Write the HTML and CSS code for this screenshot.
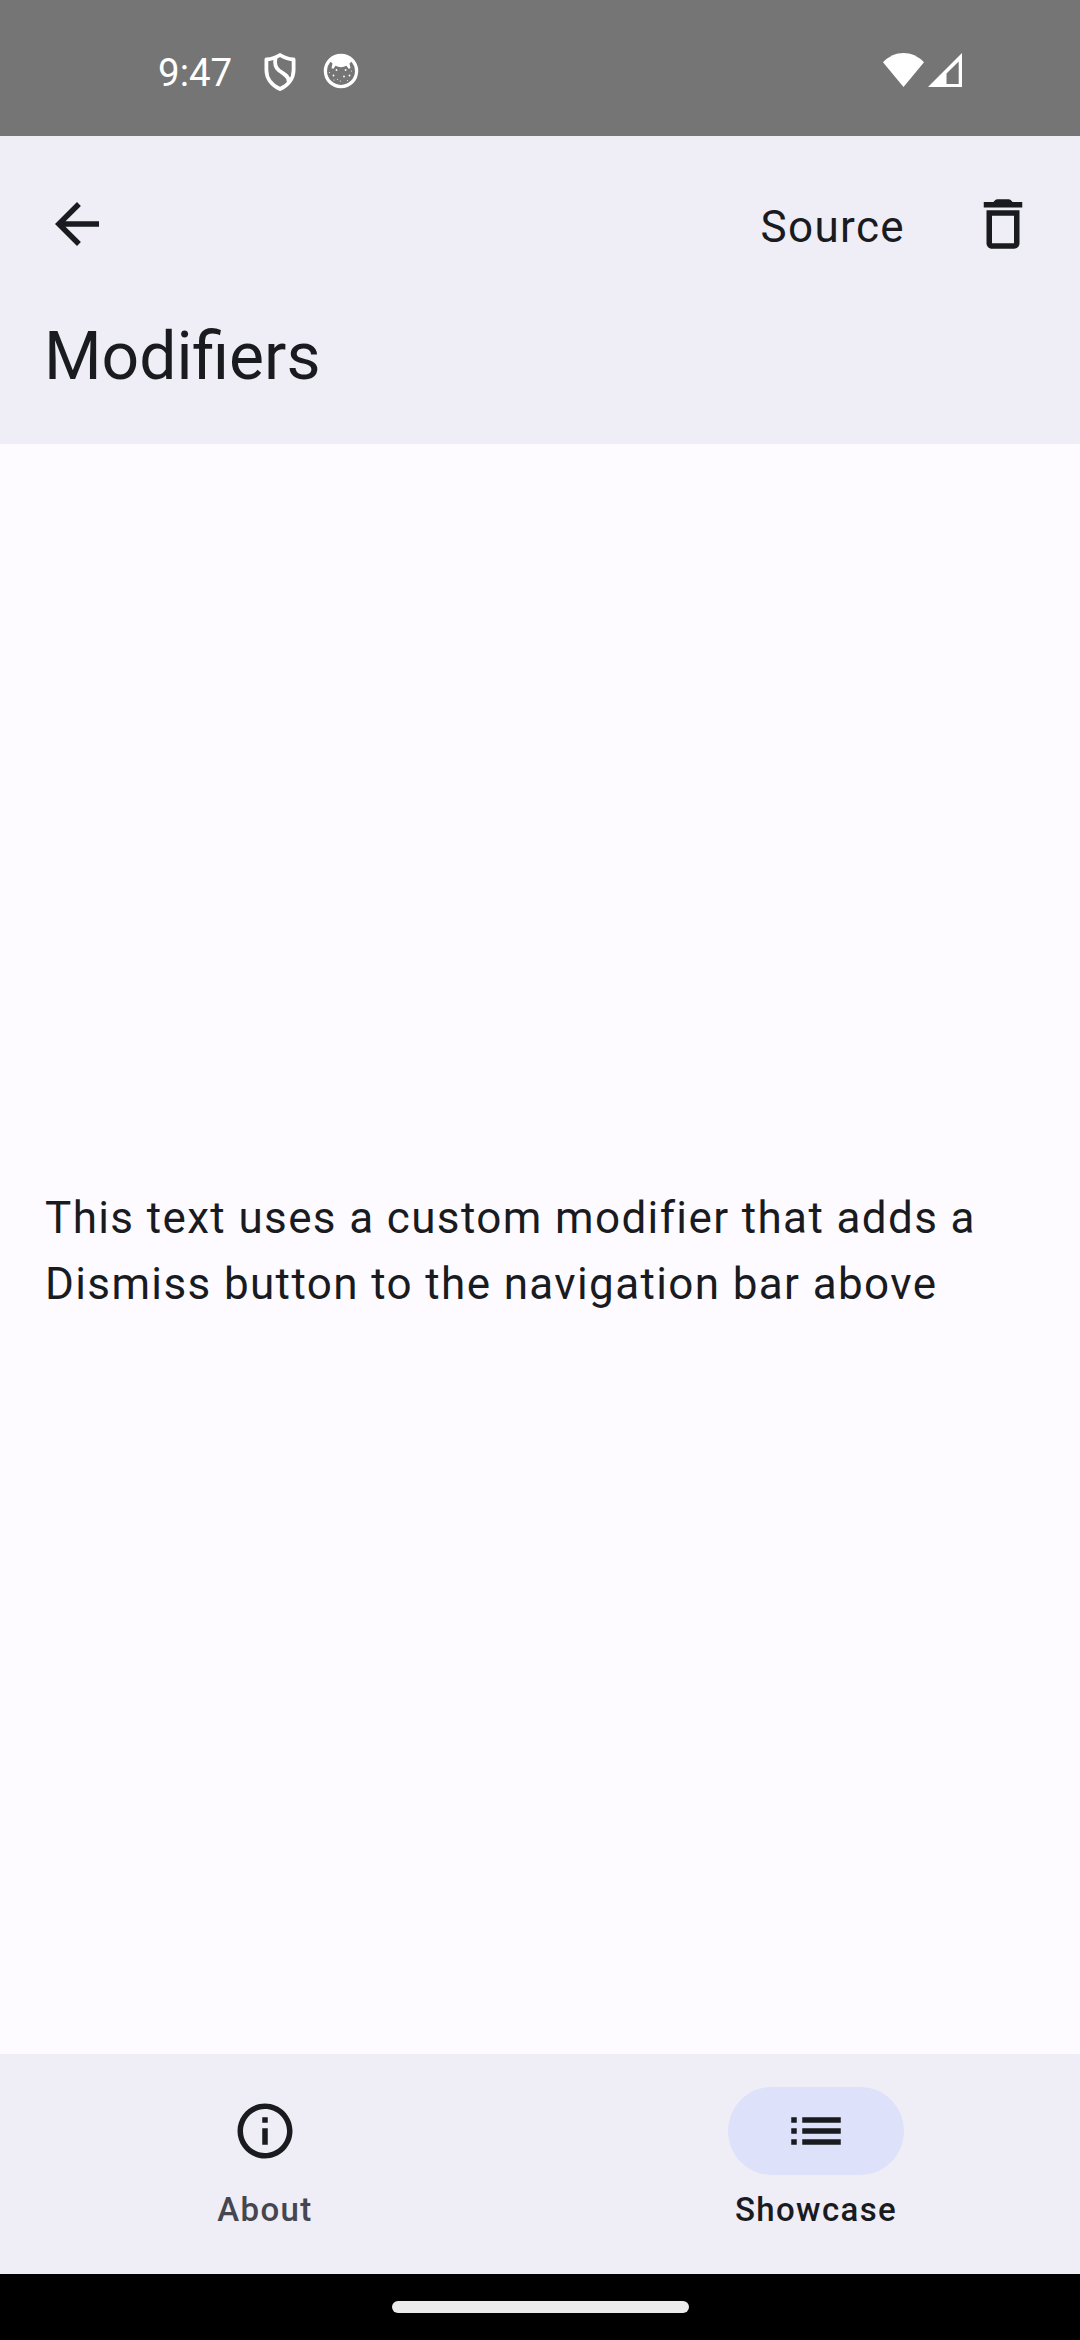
FILE: index.html
```html
<!DOCTYPE html>
<html lang="en">
<head>
<meta charset="utf-8">
<title>Modifiers</title>
<link rel="stylesheet" href="styles.css">
</head>
<body>
<div class="screen">
  <div class="status-bar">
    <div class="status-left">
      <span class="clock">9:47</span>
      <svg class="shield" viewBox="0 0 32 38" fill="none" stroke="#fff" stroke-width="3.8" stroke-linejoin="round" stroke-linecap="round">
        <path d="M16 2C12 4.600 7.500 6 2.400 6.500V17C2.400 25.500 8 32.500 16 36C24 32.500 29.600 25.500 29.600 17V6.500C24.500 6 20 4.600 16 2Z"/>
        <path d="M11.500 5C10.500 10 10.500 14 15 17.500C20 21 25 23 24.500 28"/>
      </svg>
      <svg class="cat" viewBox="0 0 36 36">
        <circle cx="18" cy="18" r="15.600" fill="none" stroke="#fff" stroke-width="3.300"/>
        <path fill="#fff" d="M7 8C11 1.500 25 1.500 29 8L26.500 10.500L27.500 15.200L25.500 15.800L23.500 12.800C20 14.600 16 14.600 12.500 12.800L10.500 15.800L8.500 15.200L9.500 10.500Z"/>
        <g fill="#fff">
          <circle cx="13.500" cy="17" r=".9"/><circle cx="22.600" cy="17" r=".9"/><circle cx="10.500" cy="22.500" r=".9"/><circle cx="21" cy="23.500" r=".9"/><circle cx="26.500" cy="22.500" r=".9"/>
          <circle cx="6.500" cy="19.500" r=".5"/><circle cx="28.500" cy="18" r=".5"/><circle cx="14.500" cy="26.500" r=".5"/><circle cx="17.300" cy="28" r=".5"/><circle cx="11" cy="27" r=".5"/><circle cx="24.500" cy="27.500" r=".5"/>
        </g>
      </svg>
    </div>
    <div class="status-right">
      <svg class="wifi" viewBox="0 0 41 34"><path fill="#fff" d="M0 9.300C11.500-3.100 29.500-3.100 41 9.300L20.500 34Z"/></svg>
      <svg class="signal" viewBox="0 0 34 34"><path fill="#fff" fill-rule="evenodd" d="M0 34L34 0V34ZM18.500 31H30.700V8.500L18.500 20.500Z"/></svg>
    </div>
  </div>

  <header class="app-bar">
    <div class="toolbar">
      <svg class="icon" viewBox="0 0 24 24"><path d="M20 11H7.830l5.590-5.590L12 4l-8 8 8 8 1.410-1.410L7.830 13H20v-2z"/></svg>
      <div class="actions">
        <span class="action-text">Source</span>
        <svg class="icon" viewBox="0 0 24 24"><path d="M6 19c0 1.100.9 2 2 2h8c1.100 0 2-.9 2-2V7H6v12zM8 9h8v10H8V9zm7.500-5l-.7-.7Q14.500 3 14 3h-4q-.5 0-.8.3l-.7.7H5v2h14V4h-3.500z"/></svg>
      </div>
    </div>
    <h1 class="title">Modifiers</h1>
  </header>

  <main class="content">
    <p class="body-text">This text uses a custom modifier that adds a Dismiss button to the navigation bar above</p>
  </main>

  <nav class="nav-bar">
    <div class="nav-item">
      <div class="indicator"><svg class="icon" viewBox="0 0 24 24"><path d="M11 7h2v2h-2zm0 4h2v6h-2zm1-9C6.480 2 2 6.480 2 12s4.480 10 10 10 10-4.480 10-10S17.520 2 12 2zm0 18c-4.410 0-8-3.590-8-8s3.590-8 8-8 8 3.590 8 8-3.590 8-8 8z"/></svg></div>
      <span class="nav-label">About</span>
    </div>
    <div class="nav-item selected">
      <div class="indicator"><svg class="icon" viewBox="0 0 24 24"><path d="M3 13h2v-2H3v2zm0 4h2v-2H3v2zm0-8h2V7H3v2zm4 4h14v-2H7v2zm0 4h14v-2H7v2zM7 7v2h14V7H7z"/></svg></div>
      <span class="nav-label">Showcase</span>
    </div>
  </nav>

  <div class="gesture-bar"><div class="handle"></div></div>
</div>
</body>
</html>
```

FILE: styles.css
```css
* { box-sizing: border-box; }

body {
  margin: 0;
  font-family: Roboto, "Liberation Sans", sans-serif;
  color: #1a1b1f;
}

svg { display: block; flex: none; }

.screen {
  width: 1080px;
  height: 2340px;
  display: flex;
  flex-direction: column;
  background: #fdfbff;
}

.status-bar {
  height: 136px;
  flex: none;
  display: flex;
  justify-content: space-between;
  align-items: flex-start;
  padding: 50px 118px 0 158px;
  background: #757575;
}

.status-left, .status-right { display: flex; }

.clock {
  width: 106px;
  font-size: 38.5px;
  line-height: 45px;
  color: #fff;
}

.shield { width: 32px; height: 38px; margin-top: 3px; }
.cat { width: 36px; height: 36px; margin: 3px 0 0 27px; }
.status-right { gap: 4px; padding-top: 3px; }
.wifi { width: 41px; height: 34px; }
.signal { width: 34px; height: 34px; }

.app-bar {
  height: 308px;
  flex: none;
  padding: 55px 44px 0;
  background: #efedf6;
}

.toolbar {
  height: 66px;
  display: flex;
  justify-content: space-between;
}

.icon {
  width: 66px;
  height: 66px;
  fill: #1a1b1f;
}

.actions { display: flex; gap: 65px; }

.action-text {
  padding-top: 3px;
  font-size: 44px;
  line-height: 66px;
  letter-spacing: 1.375px;
}

.title {
  margin: 56px 0 0;
  font-size: 66px;
  font-weight: 400;
  line-height: 88px;
}

.content {
  flex: 1;
  display: flex;
  align-items: center;
  padding: 4px 44px 0 45px;
}

.body-text {
  margin: 0;
  font-size: 44px;
  line-height: 66px;
  letter-spacing: 1.375px;
}

.nav-bar {
  height: 220px;
  flex: none;
  display: flex;
  gap: 22px;
  background: #efedf6;
}

.nav-item {
  flex: 1;
  display: flex;
  flex-direction: column;
  align-items: center;
  gap: 13px;
  padding-top: 33px;
}

.indicator {
  width: 176px;
  height: 88px;
  display: flex;
  align-items: center;
  justify-content: center;
  border-radius: 44px;
}

.nav-label {
  padding-left: 1px;
  font-size: 33px;
  font-weight: 500;
  line-height: 44px;
  letter-spacing: 1.375px;
  color: #45464f;
}

.selected .indicator { background: #dde1f9; }
.selected .nav-label { color: #1a1b1f; }

.gesture-bar {
  height: 66px;
  flex: none;
  display: flex;
  justify-content: center;
  padding-top: 27px;
  background: #000;
}

.handle {
  width: 297px;
  height: 12px;
  border-radius: 6px;
  background: #ebebeb;
}
```
